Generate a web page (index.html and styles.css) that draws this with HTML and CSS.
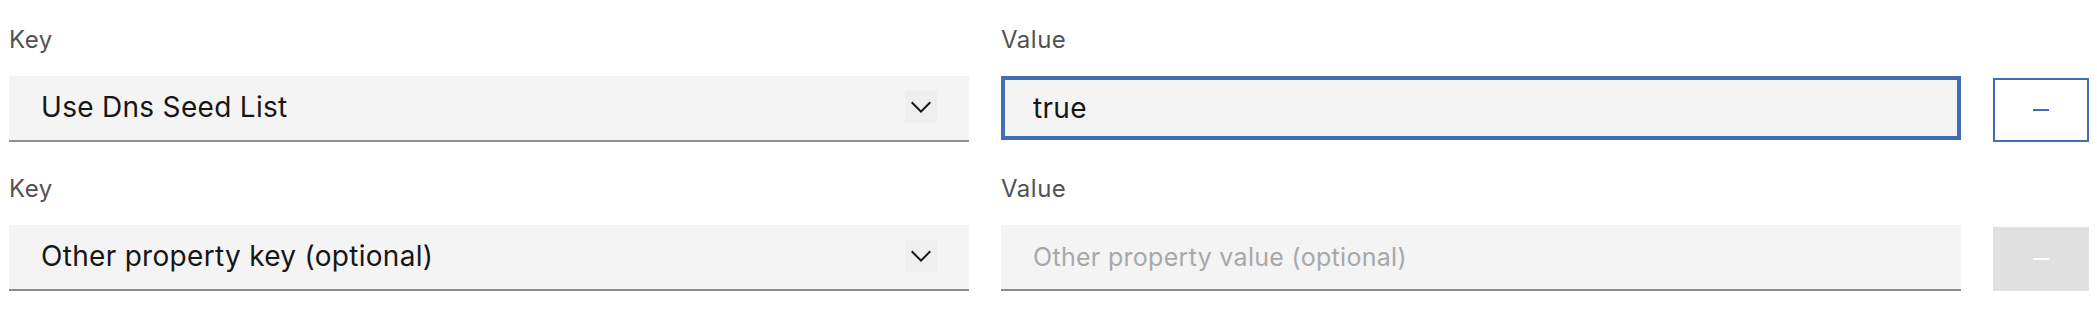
FILE: index.html
```html
<!DOCTYPE html>
<html lang="en">
<head>
<meta charset="utf-8">
<title>Key / Value properties</title>
<link rel="stylesheet" href="styles.css">
</head>
<body>
<div class="props">
  <div class="row">
    <div class="col">
      <label class="label">Key</label>
      <div class="select">
        <span class="select-text">Use Dns Seed List</span>
        <span class="chev">
          <svg width="32" height="32" viewBox="0 0 16 16"><path d="M8 11L3 6 3.7 5.3 8 9.6 12.3 5.3 13 6z" fill="#161616"/></svg>
        </span>
      </div>
    </div>
    <div class="col">
      <label class="label">Value</label>
      <input class="input focus" type="text" value="true">
    </div>
    <button class="btn" type="button" aria-label="Remove">
      <svg width="32" height="32" viewBox="0 0 32 32"><rect x="8" y="15" width="16" height="2" fill="#416db5"/></svg>
    </button>
  </div>
  <div class="row">
    <div class="col">
      <label class="label">Key</label>
      <div class="select">
        <span class="select-text">Other property key (optional)</span>
        <span class="chev">
          <svg width="32" height="32" viewBox="0 0 16 16"><path d="M8 11L3 6 3.7 5.3 8 9.6 12.3 5.3 13 6z" fill="#161616"/></svg>
        </span>
      </div>
    </div>
    <div class="col">
      <label class="label">Value</label>
      <input class="input" type="text" placeholder="Other property value (optional)">
    </div>
    <button class="btn disabled" type="button" aria-label="Remove" disabled>
      <svg width="32" height="32" viewBox="0 0 32 32"><rect x="8" y="15" width="16" height="2" fill="#ffffff"/></svg>
    </button>
  </div>
</div>
</body>
</html>
```
FILE: styles.css
```css
html, body {
  margin: 0;
  background: #ffffff;
}
body {
  font-family: Inter, "Noto Sans", sans-serif;
  color: #161616;
}
.props {
  padding: 24px 8px 0 9px;
  display: flex;
  flex-direction: column;
  gap: 31px;
}
.row {
  display: grid;
  grid-template-columns: 1fr 1fr 96px;
  column-gap: 32px;
  align-items: start;
}
.col {
  display: flex;
  flex-direction: column;
  min-width: 0;
}
.label {
  display: block;
  font-size: 24px;
  line-height: 32px;
  letter-spacing: 0.5px;
  color: #525252;
  margin-bottom: 20px;
}
.select {
  box-sizing: border-box;
  height: 66px;
  background: #f4f4f4;
  border-bottom: 2px solid #8d8d8d;
  display: flex;
  align-items: center;
  padding: 0 32px 3px 32px;
}
.select-text {
  flex: 1;
  font-size: 28px;
  line-height: 34px;
  letter-spacing: 0.3px;
  color: #161616;
  white-space: nowrap;
}
.chev {
  width: 32px;
  height: 32px;
  background: #efefef;
  display: flex;
}
.input {
  box-sizing: border-box;
  width: 100%;
  height: 66px;
  margin: 0;
  padding: 0 32px 3px 32px;
  border: 0;
  border-bottom: 2px solid #8d8d8d;
  background: #f4f4f4;
  font-family: Inter, "Noto Sans", sans-serif;
  font-size: 28px;
  letter-spacing: 0.3px;
  color: #161616;
  outline: none;
}
.input::placeholder {
  color: #a8a8a8;
  opacity: 1;
  font-size: 25px;
  letter-spacing: 0.3px;
}
.input.focus {
  height: 64px;
  border-bottom: 0;
  box-shadow: inset 0 0 0 4px #416db5;
  padding-bottom: 1px;
}
.btn {
  align-self: end;
  box-sizing: border-box;
  width: 96px;
  height: 64px;
  margin: 0;
  padding: 0;
  border: 2px solid #416db5;
  background: #ffffff;
  display: flex;
  align-items: center;
  justify-content: center;
}
.btn.disabled {
  border: 0;
  background: #e0e0e0;
}
```
